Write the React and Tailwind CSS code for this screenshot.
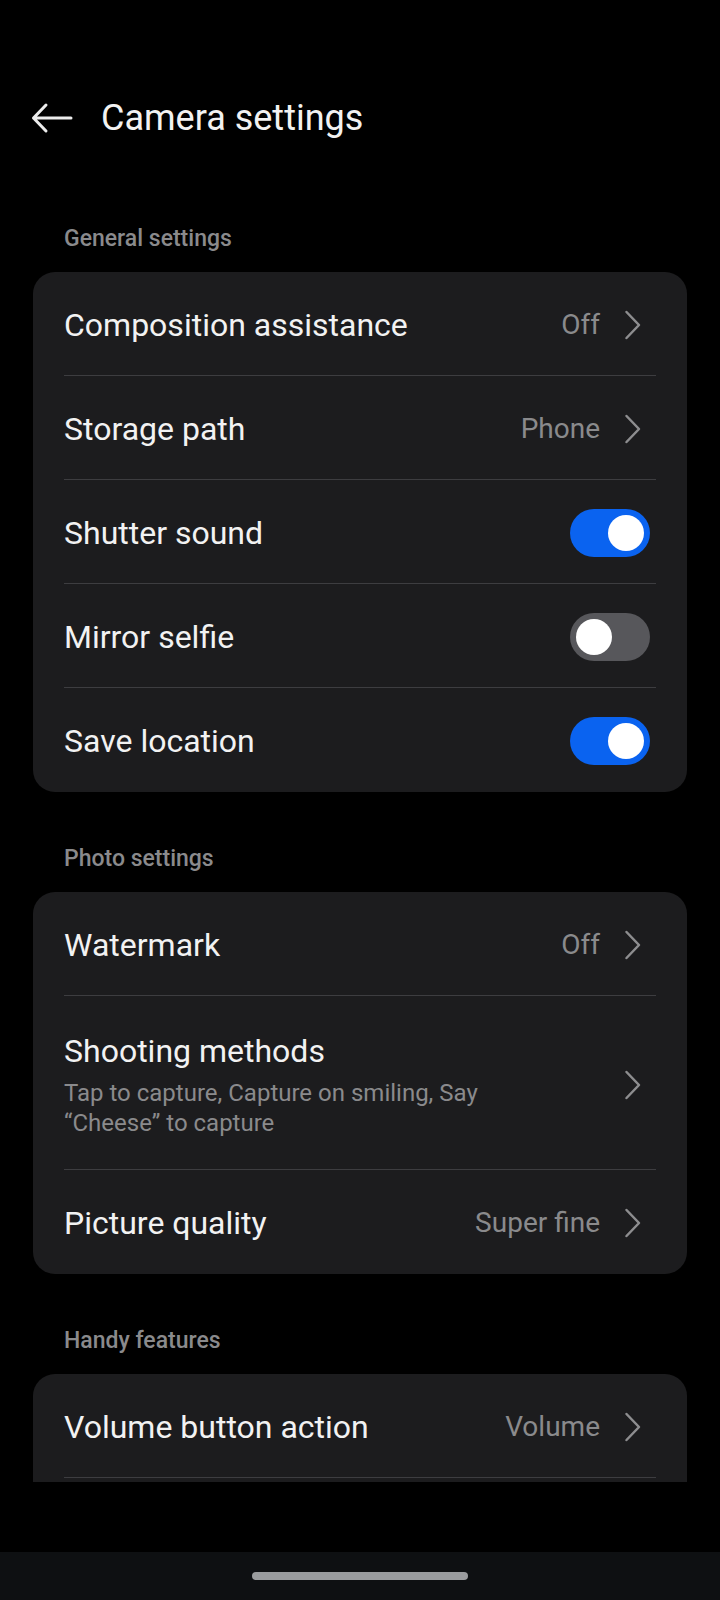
import { useState } from "react"

const font = { fontFamily: "Roboto, 'Noto Sans', sans-serif" }

function Chevron() {
  return (
    <svg width="18" height="30" viewBox="0 0 18 30" className="shrink-0 ml-[24px] mr-[14px]">
      <path d="M2.5 2 L15 15 L2.5 28" fill="none" stroke="#8d8d8f" strokeWidth="2.5" strokeLinecap="round" strokeLinejoin="round" />
    </svg>
  )
}

function Toggle({ on, onClick }) {
  return (
    <button
      onClick={onClick}
      className={`shrink-0 mr-[6px] w-[80px] h-[48px] rounded-full p-[6px] flex items-center ${on ? "bg-[#0a63f0] justify-end" : "bg-[#57575b] justify-start"}`}
    >
      <span className="block w-[36px] h-[36px] rounded-full bg-white" />
    </button>
  )
}

function Row({ title, value, subtitle, toggle, on, onToggle, last }) {
  return (
    <div className={`mx-[31px] flex items-center ${subtitle ? "pt-[36px] pb-[31px]" : "h-[104px] pt-[2px]"} ${last ? "" : "border-b border-[#3d3d40]"}`}>
      <div className="flex-1 min-w-0">
        <div className="text-[32px] text-[#f2f2f2] leading-[38px]">{title}</div>
        {subtitle && (
          <div className="text-[24px] text-[#8a8a8c] leading-[30px] mt-[8px] max-w-[470px]">{subtitle}</div>
        )}
      </div>
      {value && <span className="text-[28px] text-[#8a8a8c]">{value}</span>}
      {toggle ? <Toggle on={on} onClick={onToggle} /> : <Chevron />}
    </div>
  )
}

function Section({ label, children }) {
  return (
    <div>
      <div className="px-[64px] h-[34px] flex items-center text-[23px] font-medium text-[#8a8a8c]">{label}</div>
      <div className="mx-[33px] mt-[16px] rounded-[22px] bg-[#1c1c1e] overflow-hidden">{children}</div>
    </div>
  )
}

export default function App() {
  const [toggles, setToggles] = useState({ shutter: true, mirror: false, location: true })
  const flip = (k) => setToggles(prev => ({ ...prev, [k]: !prev[k] }))

  return (
    <div className="w-[720px] h-[1600px] bg-black flex flex-col overflow-hidden" style={font}>
      <div className="h-[222px] shrink-0 flex flex-col">
        <div className="h-[76px]" />
        <div className="flex items-center h-[84px]">
          <svg width="44" height="32" viewBox="0 0 44 32" className="ml-[30px]">
            <path d="M41 16 H3.5 M16 3 L3.5 16 L16 29" fill="none" stroke="#ececec" strokeWidth="3" strokeLinecap="round" strokeLinejoin="round" />
          </svg>
          <span className="ml-[27px] text-[36px] text-[#f2f2f2]">Camera settings</span>
        </div>
      </div>

      <div className="h-[1260px] shrink-0 overflow-hidden">
        <Section label="General settings">
          <Row title="Composition assistance" value="Off" />
          <Row title="Storage path" value="Phone" />
          <Row title="Shutter sound" toggle on={toggles.shutter} onToggle={() => flip("shutter")} />
          <Row title="Mirror selfie" toggle on={toggles.mirror} onToggle={() => flip("mirror")} />
          <Row title="Save location" toggle on={toggles.location} onToggle={() => flip("location")} last />
        </Section>

        <div className="h-[50px]" />
        <Section label="Photo settings">
          <Row title="Watermark" value="Off" />
          <Row title="Shooting methods" subtitle="Tap to capture, Capture on smiling, Say “Cheese” to capture" />
          <Row title="Picture quality" value="Super fine" last />
        </Section>

        <div className="h-[50px]" />
        <Section label="Handy features">
          <Row title="Volume button action" value="Volume" />
          <div className="h-[40px]" />
        </Section>
      </div>

      <div className="flex-1" />
      <div className="h-[48px] shrink-0 bg-[#0e1012] flex items-center justify-center">
        <div className="w-[216px] h-[8px] rounded-full bg-[#9a9c9e]" />
      </div>
    </div>
  )
}
